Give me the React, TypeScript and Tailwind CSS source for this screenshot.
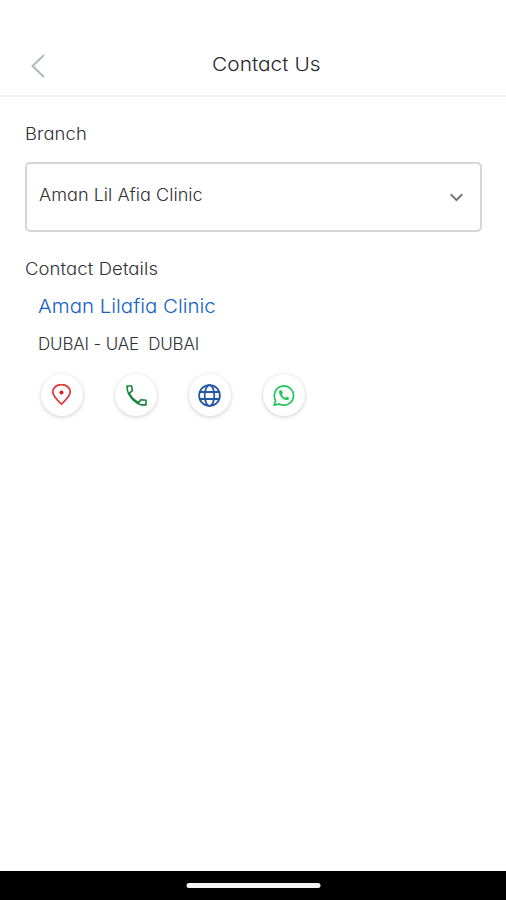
import type { ReactNode } from "react";

function RoundButton({ label, children }: { label: string; children: ReactNode }) {
  return (
    <button
      aria-label={label}
      className="flex size-[42px] items-center justify-center rounded-full bg-white shadow-[0_1px_4px_rgba(0,0,0,0.2)]"
    >
      {children}
    </button>
  );
}

function PinIcon() {
  return (
    <svg width="20" height="22" viewBox="0 0 20 22" fill="none" className="-translate-x-[0.5px] -translate-y-[0.5px]">
      <path
        d="M10 20.7C8.2 18.6 1.3 13.2 1.3 8.6C1.3 4.3 5 1.1 10 1.1C15 1.1 18.7 4.3 18.7 8.6C18.7 13.2 11.8 18.6 10 20.7Z"
        stroke="#e03636"
        strokeWidth="1.7"
        strokeLinejoin="round"
      />
      <circle cx="10" cy="9" r="2" fill="#d81f1f" />
    </svg>
  );
}

function PhoneIcon() {
  return (
    <svg width="22" height="22" viewBox="0 0 22 22" fill="none" stroke="#16843a" strokeWidth="1.6" strokeLinejoin="round" className="translate-x-[0.5px] translate-y-[0.5px]">
      <path d="M1.5 1.5H6.2L6.8 6.4L3.8 8.6C5.6 12.6 9 16.2 13.2 18L15.4 15.2L20.5 15.8V20.4H16.5C14.5 20.3 12.6 19.4 11 18.2C7.6 15.8 4.8 12.8 3 9C2 7 1.5 4 1.5 1.5Z" />
    </svg>
  );
}

function GlobeIcon() {
  return (
    <svg width="24" height="24" viewBox="0 0 24 24" fill="none" stroke="#2458a5" strokeWidth="1.8" className="-translate-x-[0.5px] translate-y-[0.5px]">
      <circle cx="12" cy="12" r="10.4" />
      <ellipse cx="12" cy="12" rx="4.8" ry="10.4" />
      <path d="M2.4 8.5H21.6M2.4 15.5H21.6" />
    </svg>
  );
}

function WhatsAppIcon() {
  return (
    <svg width="22" height="22" viewBox="0 0 22 22" fill="none" className="translate-y-[0.5px]">
      <path
        d="M1.2 20.8L2.6 15.8A9.6 9.6 0 1 1 6.2 19.4Z"
        stroke="#20c659"
        strokeWidth="1.7"
        strokeLinejoin="round"
      />
      <path
        d="M7 5.8C5.6 6.7 5.8 9 7.3 11.2C9 13.7 11.2 15.3 13.4 15.6C15 15.7 16.2 14.7 16.3 13.4L13.5 12L12.2 13.4C10.7 12.7 9.5 11.5 8.8 10.1L9.9 8.8L8.6 5.8Z"
        fill="#20c659"
      />
    </svg>
  );
}

export default function App() {
  return (
    <div className="flex h-[900px] w-[506px] flex-col bg-white font-['Inter','Open_Sans',sans-serif] font-light text-[#303236] [font-feature-settings:'cv11']">
      <header className="grid h-[97px] grid-cols-[1fr_auto_1fr] items-center border-b-2 border-[#f3f3f3] pt-[33px]">
        <button aria-label="Back" className="mt-1 pl-[31px]">
          <svg width="14" height="24" viewBox="0 0 14 24" fill="none">
            <path d="M13 1L1.5 12L13 23" stroke="#b2b8bc" strokeWidth="2" />
          </svg>
        </button>
        <h1 className="mt-px ml-[26px] scale-x-[1.1] text-[19px] leading-7 whitespace-nowrap text-[#25272b]">Contact Us</h1>
      </header>

      <main className="flex flex-1 flex-col pr-6 pl-[25px]">
        <p className="mt-[25px] origin-left scale-x-[1.08] text-[17px] leading-6 tracking-[0.1px]">Branch</p>
        <div className="mt-4 flex h-[70px] items-center justify-between rounded-[5px] border-2 border-[#d6d6d6] pr-[17px] pl-3">
          <span className="-mt-1 origin-left scale-x-[1.065] text-[17px] leading-6 whitespace-nowrap">Aman Lil Afia Clinic</span>
          <svg width="14" height="9" viewBox="0 0 14 9" fill="none" className="translate-x-[0.5px]">
            <path d="M1.2 1.2L7 7L12.8 1.2" stroke="#77797b" strokeWidth="2" />
          </svg>
        </div>
        <p className="mt-[25px] origin-left scale-x-[1.087] text-[17px] leading-6 tracking-[0.1px] whitespace-nowrap">Contact Details</p>
        <div className="pl-[13px]">
          <p className="mt-3 origin-left scale-x-[1.077] text-[19px] leading-7 whitespace-nowrap text-[#1463c4]">Aman Lilafia Clinic</p>
          <p className="mt-[11px] text-[17px] leading-6 tracking-[-0.16px] whitespace-pre">{"DUBAI - UAE  DUBAI"}</p>
          <div className="mt-[18px] flex gap-8 pl-[3px]">
            <RoundButton label="Location">
              <PinIcon />
            </RoundButton>
            <RoundButton label="Call">
              <PhoneIcon />
            </RoundButton>
            <RoundButton label="Website">
              <GlobeIcon />
            </RoundButton>
            <RoundButton label="WhatsApp">
              <WhatsAppIcon />
            </RoundButton>
          </div>
        </div>
      </main>

      <footer className="flex h-[29px] items-center justify-center bg-black">
        <div className="h-[5px] w-[134px] translate-x-[0.5px] rounded-full bg-[#f3f3f3]" />
      </footer>
    </div>
  );
}
